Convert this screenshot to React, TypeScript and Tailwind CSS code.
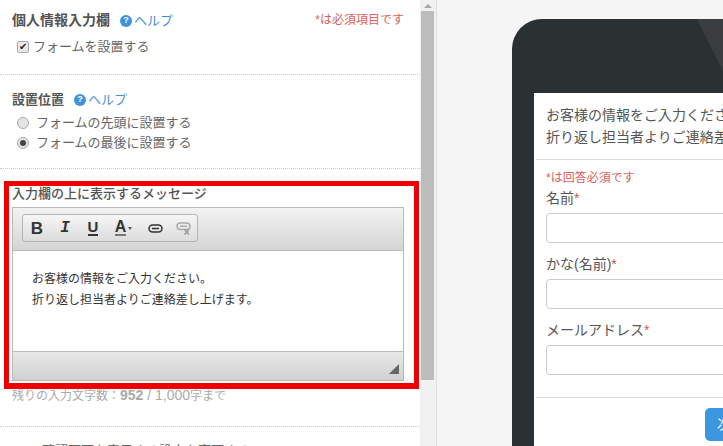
import { type ReactNode } from "react";

const font = { fontFamily: '"Liberation Sans", "Noto Sans CJK JP", sans-serif' };

function Help() {
  return (
    <span className="flex items-center gap-[2px] text-[13px] font-normal text-[#4a90d9]">
      <span className="flex h-[12px] w-[12px] items-center justify-center rounded-full bg-[#3d94dc] text-[9px] font-bold leading-none text-white">
        ?
      </span>
      ヘルプ
    </span>
  );
}

function Radio({ checked, children }: { checked?: boolean; children: ReactNode }) {
  return (
    <div className="flex h-[20px] items-center gap-[7px] pl-[5px] text-[13px] text-[#666]">
      <span className="flex h-[12px] w-[12px] items-center justify-center rounded-full border border-[#aaa] bg-[#e4e4e4]">
        {checked && <span className="h-[6px] w-[6px] rounded-full bg-[#444]" />}
      </span>
      {children}
    </div>
  );
}

function ToolButton({ className, children }: { className: string; children: ReactNode }) {
  return <span className={`flex items-center justify-center ${className}`}>{children}</span>;
}

function Toolbar() {
  return (
    <div className="h-[43px] border-b border-[#b8b8b8] bg-gradient-to-b from-[#f2f2f2] to-[#d4d5d4] pl-[9px] pt-[6px]">
      <div className="flex h-[28px] w-[176px] items-center rounded-[3px] border border-[#b4b4b4] bg-gradient-to-b from-[#f6f6f6] to-[#dcdcdc] text-[#333]">
        <ToolButton className="w-[28px]">
          <span className="text-[17px] font-bold leading-none">B</span>
        </ToolButton>
        <ToolButton className="w-[28px]">
          <span className="font-['Liberation_Mono'] text-[16px] font-bold italic leading-none">I</span>
        </ToolButton>
        <ToolButton className="w-[28px]">
          <span className="border-b-2 border-[#333] text-[15px] font-bold leading-[14px]">U</span>
        </ToolButton>
        <ToolButton className="w-[33px]">
          <span className="border-b-2 border-[#777] text-[16px] font-bold leading-[14px]">A</span>
          <span className="ml-[2px] mt-[1px] border-x-[2.5px] border-t-[3px] border-x-transparent border-t-[#555]" />
        </ToolButton>
        <ToolButton className="w-[30px]">
          <svg width="15" height="9" viewBox="0 0 15 9" fill="none" stroke="#333" strokeWidth="1.5">
            <rect x="1" y="1" width="13" height="7" rx="3.5" />
            <path d="M4 4.5h7" />
          </svg>
        </ToolButton>
        <ToolButton className="w-[26px]">
          <svg width="15" height="13" viewBox="0 0 15 13" fill="none" stroke="#aaa" strokeWidth="1.5">
            <rect x="1" y="1" width="13" height="6.5" rx="3.2" />
            <path d="M4 4.2h7" />
            <path d="M8.5 7.5l4.5 5M13 7.5l-4.5 5" stroke="#999" />
          </svg>
        </ToolButton>
      </div>
    </div>
  );
}

function Editor() {
  return (
    <div className="border border-[#b8b8b8]">
      <Toolbar />
      <div className="h-[100px] bg-white pl-[19px] pt-[18px] text-[12px] leading-[21px] text-[#333]">
        <p>お客様の情報をご入力ください。</p>
        <p>折り返し担当者よりご連絡差し上げます。</p>
      </div>
      <div className="flex h-[29px] items-end justify-end border-t border-[#b8b8b8] bg-gradient-to-b from-[#e8e8e8] to-[#d0d1d0] pb-[6px] pr-[4px]">
        <svg width="10" height="10" viewBox="0 0 10 10">
          <path d="M10 0V10H0Z" fill="#666" />
        </svg>
      </div>
    </div>
  );
}

function SettingsPanel() {
  return (
    <div className="h-full w-[420px] shrink-0 overflow-hidden bg-white">
      <section className="h-[75px] border-b border-dotted border-[#ccc] pl-[12px] pr-[16px] pt-[10px]">
        <div className="flex items-center justify-between">
          <div className="flex items-center gap-[10px] text-[14px] font-bold text-[#555]">
            個人情報入力欄
            <Help />
          </div>
          <span className="-mt-[2px] text-[12px] text-[#d9625a]">*は必須項目です</span>
        </div>
        <label className="mt-[6px] flex items-center gap-[4px] pl-[5px] text-[13px] text-[#666]">
          <span className="flex h-[12px] w-[12px] items-center justify-center rounded-[2px] border border-[#aaa] bg-[#e8e8e8] text-[10px] leading-none text-[#222]">
            ✔
          </span>
          フォームを設置する
        </label>
      </section>
      <section className="h-[94px] border-b border-dotted border-[#ccc] pl-[12px] pt-[16px]">
        <div className="mb-[5px] flex h-[17px] items-center gap-[10px] text-[13px] font-bold text-[#555]">
          設置位置
          <Help />
        </div>
        <Radio>フォームの先頭に設置する</Radio>
        <Radio checked>フォームの最後に設置する</Radio>
      </section>
      <div className="ml-[4px] mt-[12px] h-[208px] w-[415px] border-[5px] border-b-[6px] border-[#ee0000] pl-[3px] pr-[10px]">
        <div className="flex h-[21px] items-start text-[13px] font-medium leading-[15px] text-[#555]">
          入力欄の上に表示するメッセージ
        </div>
        <Editor />
      </div>
      <p className="pl-[12px] text-[12px] leading-[12px] text-[#aaa]">
        残りの入力文字数：<b className="text-[14px] font-bold">952</b>
        <span className="text-[14px]"> / 1,000</span>字まで
      </p>
      <div className="mt-[24px] border-t border-dotted border-[#ccc] pl-[42px] pt-[14px] text-[13px] text-[#666]">
        確認画面を表示する設定を変更する
      </div>
    </div>
  );
}

function Scrollbar() {
  return (
    <div className="flex h-full w-[17px] shrink-0 flex-col border-r border-[#ddd] bg-[#f1f1f1]">
      <div className="flex h-[11px] items-center justify-center">
        <span className="border-x-[4px] border-b-[4px] border-x-transparent border-b-[#a8a8a8]" />
      </div>
      <div className="ml-[1px] h-[369px] w-[13px] bg-[#bcbcbc]" />
    </div>
  );
}

function Field({ label }: { label: string }) {
  return (
    <div className="mb-[11px]">
      <div className="h-[25px] text-[14px] leading-[21px] text-[#555]">
        {label}
        <span className="text-[#d9534f]">*</span>
      </div>
      <div className="h-[30px] w-[300px] rounded-[4px] border border-[#ccc] bg-white" />
    </div>
  );
}

function PhonePreview() {
  return (
    <div className="h-full flex-1 overflow-hidden bg-[#f5f5f5] pl-[75px] pt-[19px]">
      <div className="relative h-[500px] w-[400px] overflow-hidden rounded-tl-[30px] bg-[#2b3032] pl-[22px] pt-[74px]">
        <div className="absolute left-[185px] top-0 h-[80px] w-[200px] bg-[#3a3e40] [clip-path:polygon(0_0,100%_0,100%_100%,20%_100%)]" />
        <div className="relative h-[400px] bg-white">
          <div className="ml-[2px] h-[67px] whitespace-nowrap border-b border-[#ddd] pl-[10px] pt-[11px] text-[14px] leading-[22px] text-[#555]">
            <p>お客様の情報をご入力ください。</p>
            <p>折り返し担当者よりご連絡差し上げます。</p>
          </div>
          <div className="pl-[12px] pt-[10px]">
            <p className="h-[18px] text-[12px] leading-[16px] text-[#d9625a]">*は回答必須です</p>
            <Field label="名前" />
            <Field label="かな(名前)" />
            <Field label="メールアドレス" />
          </div>
          <div className="ml-[2px] mt-[22px] border-t border-[#ddd] pl-[169px] pt-[10px]">
            <div className="h-[33px] w-[60px] rounded-[5px] bg-[#3d97e0] pl-[12px] text-[14px] leading-[33px] text-white">
              次へ
            </div>
          </div>
        </div>
      </div>
    </div>
  );
}

export default function App() {
  return (
    <div className="flex h-[446px] w-[723px] overflow-hidden" style={font}>
      <SettingsPanel />
      <Scrollbar />
      <PhonePreview />
    </div>
  );
}
